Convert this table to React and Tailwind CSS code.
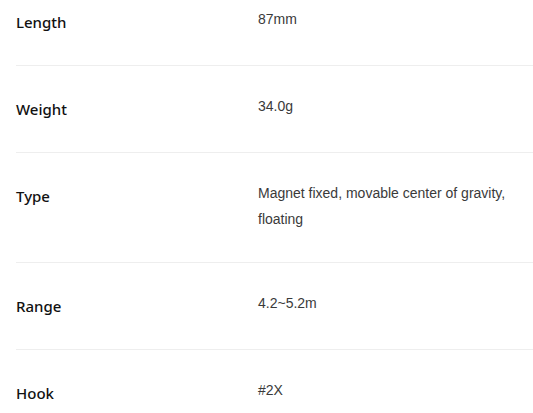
const specs = [
  { label: "Length", value: "87mm" },
  { label: "Weight", value: "34.0g" },
  { label: "Type", value: "Magnet fixed, movable center of gravity, floating" },
  { label: "Range", value: "4.2~5.2m" },
  { label: "Hook", value: "#2X" },
];

export default function App() {
  return (
    <div className="bg-white h-screen overflow-hidden">
      <div className="pl-4 -mt-[21px]">
        {specs.map((s, i) => (
          <div
            key={s.label}
            className={`flex items-start py-[30px] ${i < specs.length - 1 ? "border-b border-[#eeeeee]" : ""}`}
          >
            <div className="w-[242px] shrink-0 text-[15px] leading-[26px] font-medium text-[#111] font-['Noto_Sans',sans-serif]">
              {s.label}
            </div>
            <div className="w-[265px] -mt-[3px] text-[14px] leading-[26px] text-[#3a3a3a] font-['Liberation_Sans',sans-serif]">
              {s.value}
            </div>
          </div>
        ))}
      </div>
    </div>
  );
}
